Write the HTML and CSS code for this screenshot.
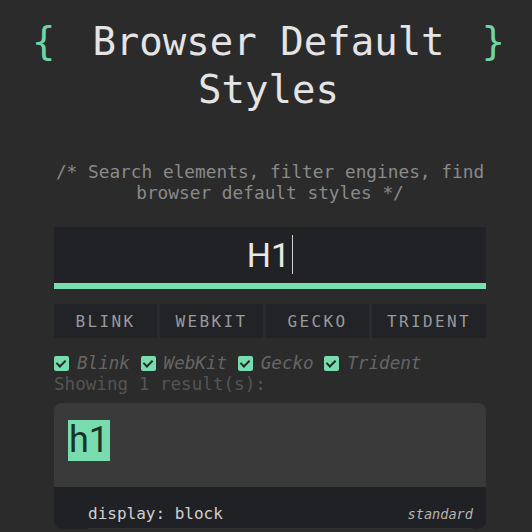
FILE: index.html
```html
<!DOCTYPE html>
<html lang="en">
<head>
  <meta charset="UTF-8">
  <title>Browser Default Styles</title>
  <link rel="stylesheet" href="styles.css">
</head>
<body>

  <header class="top">
    <h1 class="title">
      <span class="brace">{</span>
      <span class="title-text">Browser Default Styles</span>
      <span class="brace">}</span>
    </h1>
    <p class="subtitle">/* Search elements, filter engines, find browser default styles */</p>
  </header>

  <main class="wrapper">
    <div class="search-box">
      <span class="search-value">H1</span><span class="caret"></span>
    </div>

    <div class="engines">
      <button class="engine-btn">BLINK</button>
      <button class="engine-btn">WEBKIT</button>
      <button class="engine-btn">GECKO</button>
      <button class="engine-btn">TRIDENT</button>
    </div>

    <div class="filters">
      <label><input type="checkbox" checked>Blink</label>
      <label><input type="checkbox" checked>WebKit</label>
      <label><input type="checkbox" checked>Gecko</label>
      <label><input type="checkbox" checked>Trident</label>
    </div>
    <div class="count">Showing 1 result(s):</div>

    <section class="result">
      <div class="result-head">
        <span class="tag">h1</span>
      </div>
      <ul class="props">
        <li class="prop">
          <span>display: block</span>
          <em class="source">standard</em>
        </li>
      </ul>
    </section>
  </main>

</body>
</html>
```

FILE: styles.css
```css
* {
  margin: 0;
  padding: 0;
  box-sizing: border-box;
  font-family: 'DejaVu Sans Mono', monospace;
}

body {
  background: #2b2b2b;
  color: #e6e6e6;
  overflow: hidden;
}

.title {
  display: flex;
  padding: 0 27px 0 32px;
  margin-top: 18px;
  font-size: 39px;
  line-height: 48px;
  font-weight: normal;
}

.brace {
  width: 1ch;
  color: #6fd5a6;
}

.title-text {
  flex: 1;
  text-align: center;
  color: #e4e4e4;
}

.subtitle {
  margin: 47px 40px 0 48px;
  text-align: center;
  font-size: 17.8px;
  line-height: 21px;
  color: #8a8a8a;
}

.wrapper {
  margin: 24px 46px 0 54px;
}

.search-box {
  height: 62px;
  background: #212226;
  border-bottom: 6px solid #7adfb0;
  text-align: center;
}

.search-value {
  font-family: Roboto, sans-serif;
  font-size: 34px;
  line-height: 56px;
  color: #e8e8e8;
}

.caret {
  display: inline-block;
  width: 1px;
  height: 39px;
  margin-left: 2px;
  vertical-align: -7px;
  background: #d0d0d0;
}

.engines {
  display: grid;
  grid-template-columns: 103px 103px 103px 1fr;
  gap: 3px;
  margin-top: 15px;
}

.engine-btn {
  height: 34px;
  background: #222327;
  border: none;
  color: #9a9a9a;
  font-size: 16px;
  letter-spacing: 2.4px;
}

.filters {
  margin-top: 15px;
  font-size: 17.6px;
  line-height: 21px;
  color: #666;
  font-style: italic;
}

.filters input {
  appearance: none;
  position: relative;
  width: 15px;
  height: 15px;
  margin: 0 8px 0 0;
  vertical-align: -2px;
  background: #79dcae;
  border-radius: 2px;
}

.filters input::after {
  content: "";
  position: absolute;
  left: 4px;
  top: 2px;
  width: 4px;
  height: 7px;
  border: solid #1c2a24;
  border-width: 0 2px 2px 0;
  transform: rotate(45deg);
}

.count {
  font-size: 17.6px;
  line-height: 21px;
  color: #555;
}

.result {
  margin-top: 8px;
  border-radius: 8px;
  overflow: hidden;
  background: #3a3a3a;
}

.result-head {
  padding: 17px 14px 26px;
}

.tag {
  display: inline-block;
  padding: 0 1px;
  font-family: Roboto, sans-serif;
  font-size: 36px;
  line-height: 41px;
  background: #79dcae;
  color: #1a3328;
}

.props {
  list-style: none;
  background: #202124;
  padding: 9px 13px 0 34px;
}

.prop {
  display: flex;
  justify-content: space-between;
  align-items: baseline;
  padding: 8px 0 4px;
  border-bottom: 1px solid #303135;
  font-size: 16px;
  line-height: 19px;
  color: #d0d0d0;
}

.source {
  font-size: 13.6px;
  color: #b5b5b5;
}
```
